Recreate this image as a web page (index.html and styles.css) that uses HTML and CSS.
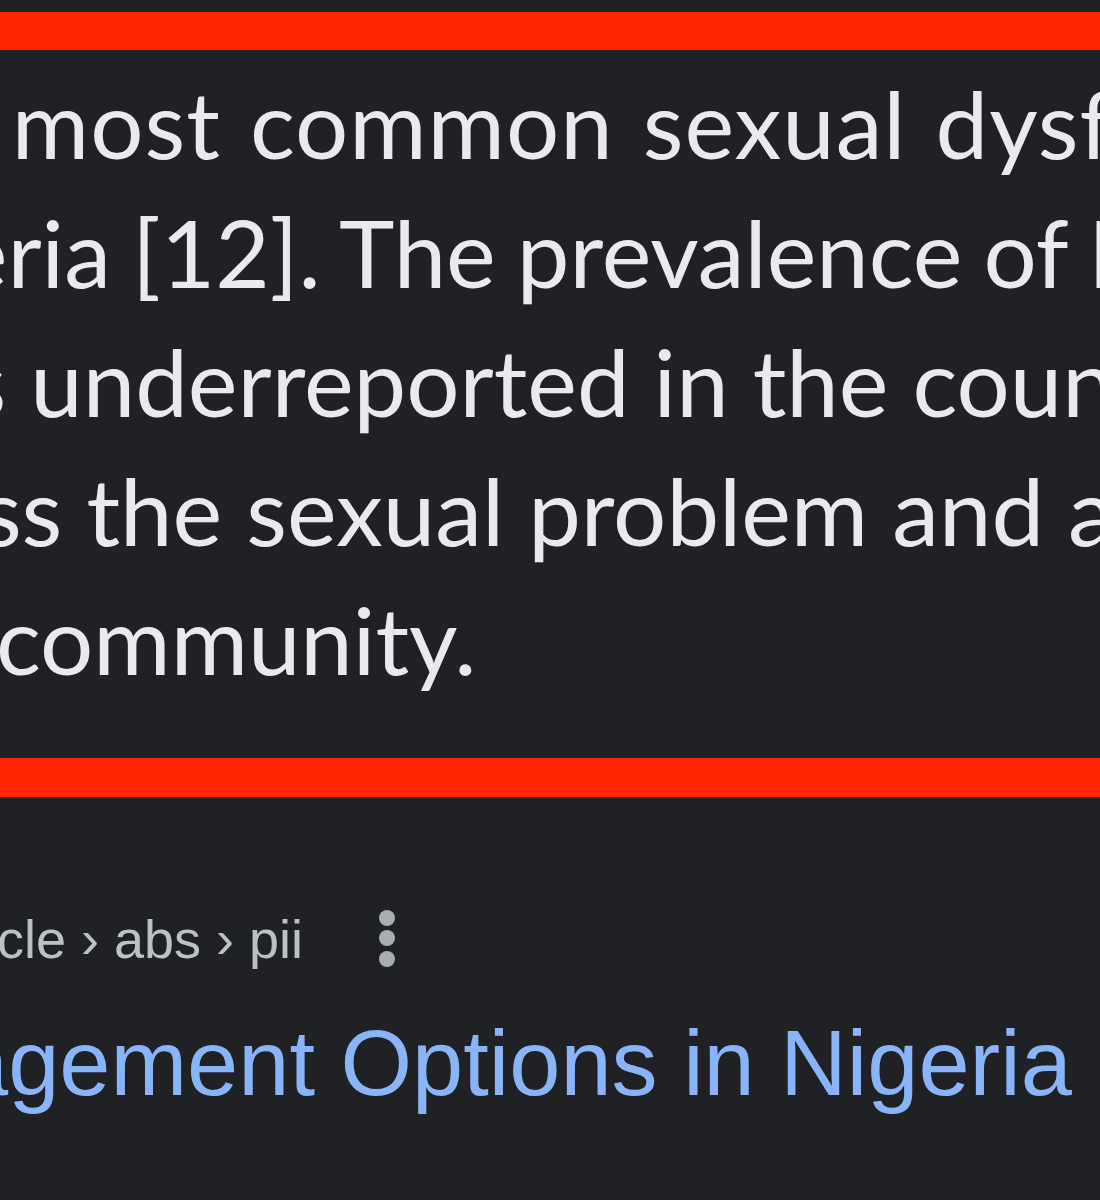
FILE: index.html
```html
<!DOCTYPE html>
<html lang="en">
<head>
<meta charset="utf-8">
<title>Search result</title>
<link rel="stylesheet" href="styles.css">
</head>
<body>
<div class="page">
  <div class="bar bar-top"></div>
  <div class="snippet">
    <div class="line l1">the most common sexual dysfunction</div>
    <div class="line l2">Nigeria [12]. The prevalence of ED</div>
    <div class="line l3">is underreported in the country</div>
    <div class="line l4">address the sexual problem and awareness</div>
    <div class="line l5">community.</div>
  </div>
  <div class="bar bar-bottom"></div>
  <div class="result">
    <div class="cite-row">
      <span class="cite">article › abs › pii</span>
      <svg class="kebab" width="20" height="60" viewBox="0 0 20 60" aria-hidden="true">
        <circle cx="10" cy="9" r="8"/>
        <circle cx="10" cy="29" r="8"/>
        <circle cx="10" cy="50" r="8"/>
      </svg>
    </div>
    <div class="title">Management Options in Nigeria</div>
  </div>
</div>
</body>
</html>
```
FILE: styles.css
```css
html, body {
  margin: 0;
  padding: 0;
  background: #202124;
}
.page {
  width: 1100px;
  height: 1200px;
  overflow: hidden;
  padding-top: 12px;
  box-sizing: border-box;
}
.bar {
  background: #ff2600;
  height: 38px;
}
.bar-bottom {
  height: 39px;
  margin-top: 55px;
}
.snippet {
  margin-top: 8px;
  font-family: Lato, "Open Sans", sans-serif;
  font-size: 94px;
  line-height: 129px;
  color: #e8eaed;
}
.line {
  white-space: nowrap;
}
.l1 { margin-left: -156px; word-spacing: 4px; letter-spacing: 1px; }
.l2 { margin-left: -184px; word-spacing: -3px; }
.l3 { margin-left: -57px; }
.l4 { margin-left: -253px; }
.l5 { margin-left: -4px; }
.result {
  padding-top: 107px;
  font-family: "Liberation Sans", Arial, sans-serif;
}
.cite-row {
  display: flex;
  align-items: center;
  height: 70px;
  margin-left: -78px;
}
.cite {
  font-size: 54px;
  line-height: 70px;
  color: #bdc1c6;
  white-space: nowrap;
}
.kebab {
  margin-left: 74px;
  fill: #a9acb1;
  flex: none;
}
.title {
  margin-top: 31px;
  margin-left: -222px;
  font-size: 92px;
  line-height: 116px;
  color: #8ab4f8;
  white-space: nowrap;
}
```
